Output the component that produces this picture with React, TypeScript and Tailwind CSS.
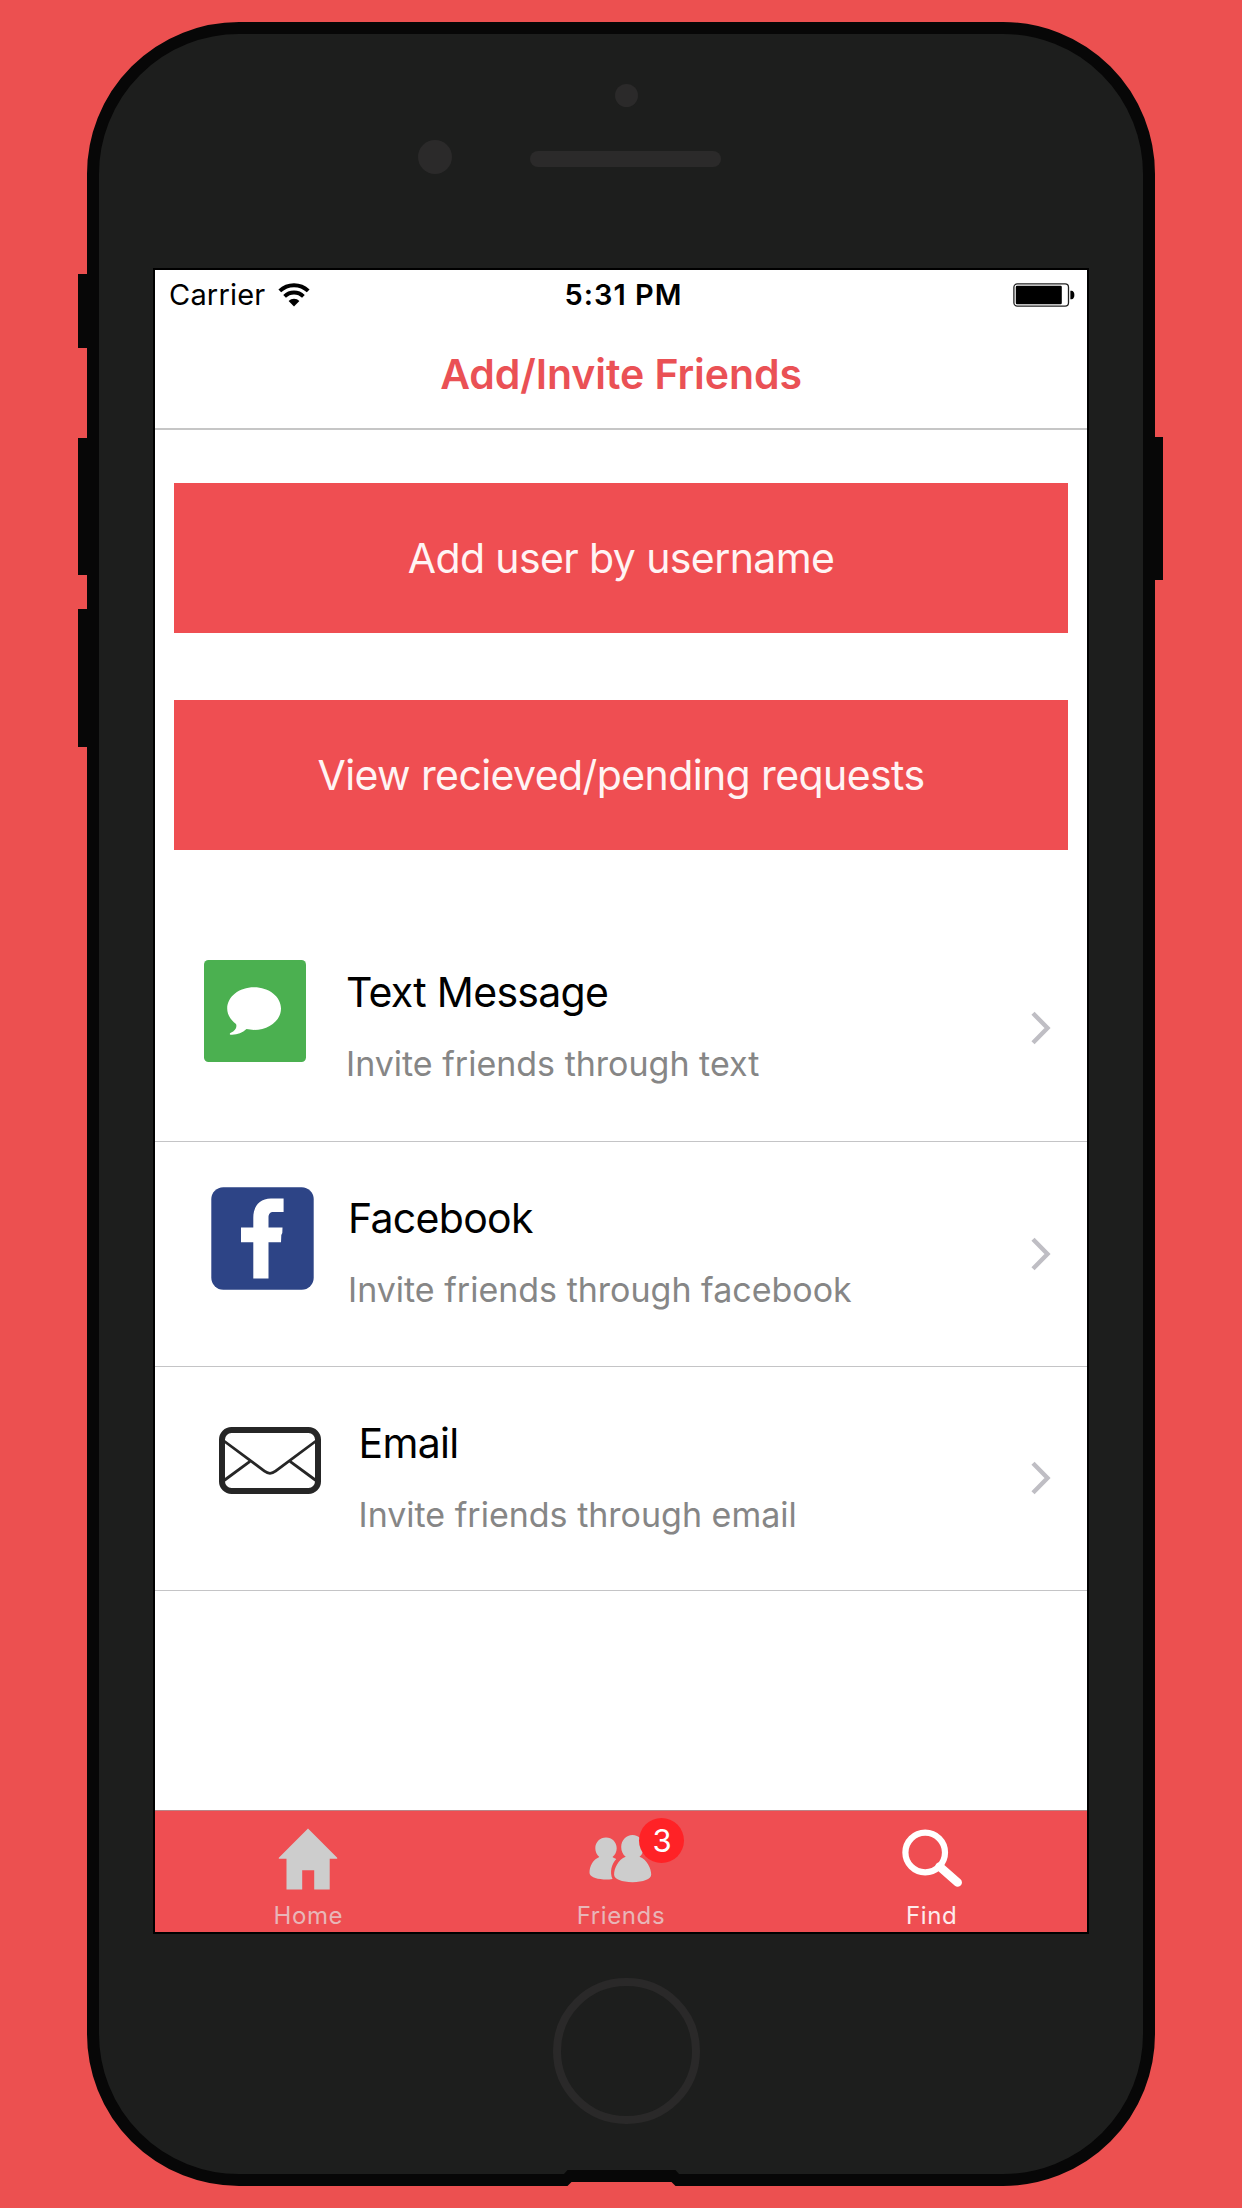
import type { ReactNode } from "react";

function WifiIcon() {
  return (
    <svg className="h-[24px] w-[32px]" viewBox="0 0 32 24" fill="none">
      <path d="M1.800 7.900a20.500 20.500 0 0 1 28.400 0" stroke="#000" strokeWidth="4" />
      <path d="M6.600 13.400a13.300 13.300 0 0 1 18.800 0" stroke="#000" strokeWidth="3.800" />
      <path d="M16 23.400l-5.400-5.400a7.600 7.600 0 0 1 10.800 0z" fill="#000" />
    </svg>
  );
}

function BatteryIcon() {
  return (
    <svg className="h-[24px] w-[62px]" viewBox="0 0 62 24">
      <rect x="0.900" y="0.900" width="54.600" height="22.200" rx="3.400" fill="#fff" stroke="#222" strokeWidth="1.300" />
      <rect x="2.800" y="2.800" width="46" height="18.400" rx="1.200" fill="#000" />
      <path d="M57.400 7.800h1.200c1.600 0 2.800 1.600 2.800 4.200s-1.200 4.200-2.800 4.200h-1.200z" fill="#000" />
    </svg>
  );
}

function MessageIcon() {
  return (
    <svg className="h-[102px] w-[102px]" viewBox="0 0 102 102">
      <rect width="102" height="102" rx="4.500" fill="#4bb050" />
      <path
        d="M50 27.300c14.900 0 27 9.400 27 21.300s-12.100 21.300-27 21.300c-2.700 0-5.200-.3-7.500-.8-4.200 3.800-9.500 6-15.500 5.700-1.600-.1-1.600-1.400-.2-2 4.400-1.900 6.600-5.300 5.200-8.800C26.700 60 23.200 54.600 23.200 48.600c0-11.900 12-21.300 26.800-21.300z"
        fill="#fff"
      />
    </svg>
  );
}

function FacebookIcon() {
  return (
    <svg className="h-[103px] w-[103px]" viewBox="0 0 103 103">
      <rect x="0.300" y="0.300" width="102.400" height="102.400" rx="12" fill="#2d4486" />
      <path
        d="M42.300 91.500V55.300H30V40.500h12.300V30.500c0-11.500 6.700-19 17.500-19H72.600V25H62.500c-3.500 0-5 2-5 5.500v10h14l-.2 5.500-1 2-.3 7.300H57.500v36.200z"
        fill="#fff"
      />
    </svg>
  );
}

function EmailIcon() {
  return (
    <svg className="mt-[15.500px] h-[68px] w-[102px]" viewBox="0 0 102 68" fill="none" stroke="#262626">
      <rect x="3" y="3" width="96" height="61" rx="9.500" strokeWidth="6" />
      <path d="M5 14l40.500 30.200c3.500 2.700 7.500 2.700 11 0L97 14" strokeWidth="2.800" />
      <path d="M5 53.500l26-19.200M97 53.500l-26-19.200" strokeWidth="2.800" />
    </svg>
  );
}

function Chevron() {
  return (
    <svg className="h-[34px] w-[20px]" viewBox="0 0 20 34" fill="none">
      <path d="M2 2.300L16.500 17 2 31.700" stroke="#bfbec4" strokeWidth="4.400" />
    </svg>
  );
}

function HomeIcon() {
  return (
    <svg className="h-[62px] w-[60px]" viewBox="0 0 60 62">
      <path d="M30 0.500l29.200 29.200v1H51.700V61.500H36.200V42.300H24.200V61.500H8.500V30.700H0.800v-1z" fill="#cdcdcd" />
    </svg>
  );
}

function FriendsIcon() {
  return (
    <svg className="h-[48px] w-[63px]" viewBox="0 0 63 48" fill="#cdcdcd">
      <path d="M17 2.500c6 0 10.700 4.700 10.700 10.700 0 3.600-1.600 6.700-4.200 8.800.7.800 2.200 1.300 3.800 2.100-4.800 4.600-6.800 13.700-3.800 19.900-3 .5-6.300.6-9 .4C6 44.100.500 41.500.500 37.600c0-6.600 3.600-13 9.800-15.600-2.400-2-4-5.200-4-8.800C6.300 7.200 11 2.500 17 2.500z" />
      <path d="M43.500 0c6.300 0 11.400 5.300 11.400 12 0 4-1.700 7.600-4.400 9.800C58 24.600 62.200 33.500 62.200 39.600c0 4.700-8 7.600-18.700 7.600s-18.400-2.900-18.400-7.600c0-6.100 4-15 11.600-17.800-2.800-2.200-4.500-5.800-4.500-9.800C32.200 5.300 37.200 0 43.500 0z" />
    </svg>
  );
}

function SearchIcon() {
  return (
    <svg className="h-[61px] w-[61px]" viewBox="0 0 61 61" fill="none" stroke="#fff">
      <circle cx="23.200" cy="23.500" r="19.800" strokeWidth="6.200" />
      <path d="M37.500 37.500L55.700 53.500" strokeWidth="8.500" strokeLinecap="round" />
    </svg>
  );
}

function ActionButton({ children }: { children: ReactNode }) {
  return (
    <button className="flex h-[150px] w-full items-center justify-center bg-[#ef4e52] text-[41px] leading-[51px] font-normal tracking-[-0.600px] text-[#fff4f4]">
      {children}
    </button>
  );
}

type RowProps = {
  icon: ReactNode;
  title: string;
  subtitle: string;
  className: string;
  textClassName: string;
};

function InviteRow({ icon, title, subtitle, className, textClassName }: RowProps) {
  return (
    <li className={`flex border-b border-[#c4c4c6] pr-[36px] ${className}`}>
      {icon}
      <div className={`flex flex-1 flex-col gap-[22px] whitespace-nowrap ${textClassName}`}>
        <h2 className="text-[41px] leading-[50px] tracking-[-0.700px] text-black">{title}</h2>
        <p className="text-[34px] leading-[50px] text-[#868686]">{subtitle}</p>
      </div>
      <div className="self-center pb-[45px]">
        <Chevron />
      </div>
    </li>
  );
}

export default function App() {
  return (
    <div className="h-[2208px] w-[1242px] overflow-hidden bg-[#ec5050] pt-[22px] pl-[87px] font-[Inter,'Liberation_Sans',sans-serif]">
      <div className="relative h-[2164px] w-[1067.500px] rounded-[152px] border-[12px] border-[#070707] bg-[#1d1e1d] pt-[234px] pl-[54px]">
        {/* Side buttons */}
        <div className="absolute top-[240px] -left-[21px] h-[74px] w-[12px] bg-[#070707]" />
        <div className="absolute top-[403.500px] -left-[21px] h-[137.500px] w-[12px] bg-[#070707]" />
        <div className="absolute top-[575px] -left-[21px] h-[137.500px] w-[12px] bg-[#070707]" />
        <div className="absolute top-[403px] -right-[20px] h-[143px] w-[12px] bg-[#070707]" />

        {/* Camera, proximity sensor and speaker */}
        <div className="absolute top-[49.500px] left-[515.500px] h-[23px] w-[23px] rounded-full bg-[#2b2a2a]" />
        <div className="absolute top-[105.500px] left-[318.500px] h-[34px] w-[34px] rounded-full bg-[#2b2a2a]" />
        <div className="absolute top-[116.500px] left-[431.300px] h-[16px] w-[191px] rounded-full bg-[#2b2a2a]" />

        {/* Home button */}
        <div className="absolute top-[1943.500px] left-[454px] h-[146.500px] w-[147px] rounded-full border-[8.500px] border-[#2a2929]" />

        {/* Charging port */}
        <svg className="absolute -bottom-[12px] left-[464px] h-[17px] w-[118px]" viewBox="0 0 118 17">
          <path d="M1 5L4.500 1H112.500L116 5V17H1z" fill="#070707" />
          <path d="M4.500 17L8.500 13H108.500L112.500 17z" fill="#ec5050" />
        </svg>

        <div className="flex h-[1666px] w-[936px] flex-col border-2 border-black bg-white">
          <div className="grid h-[49px] grid-cols-3 items-center pr-[12px] pl-[14px] text-[29px] leading-[49px] text-black">
            <div className="flex items-center gap-[13px]">
              <span className="tracking-[0.200px]">Carrier</span>
              <WifiIcon />
            </div>
            <span className="pl-[3px] text-center font-semibold tracking-[1px]">5:31 PM</span>
            <div className="flex justify-end">
              <BatteryIcon />
            </div>
          </div>
          <h1 className="h-[111px] border-b-2 border-[#c6c6c6] text-center text-[41px] leading-[110px] font-semibold tracking-[-0.080px] text-[#ea5155]">
            Add/Invite Friends
          </h1>

          <div className="flex flex-col gap-[67px] px-[19px] pt-[53.400px]">
            <ActionButton>Add user by username</ActionButton>
            <ActionButton>View recieved/pending requests</ActionButton>
          </div>

          <ul className="mt-[66.600px] flex-1">
            <InviteRow
              className="h-[225px] pl-[49px] pt-[43px]"
              textClassName="ml-[40px] mt-[7px]"
              icon={<MessageIcon />}
              title="Text Message"
              subtitle="Invite friends through text"
            />
            <InviteRow
              className="h-[225px] pl-[56px] pt-[45px]"
              textClassName="ml-[34px] mt-[6px]"
              icon={<FacebookIcon />}
              title="Facebook"
              subtitle="Invite friends through facebook"
            />
            <InviteRow
              className="h-[224px] pl-[64px] pt-[45px]"
              textClassName="ml-[37.500px] mt-[6px]"
              icon={<EmailIcon />}
              title="Email"
              subtitle="Invite friends through email"
            />
          </ul>

          <nav className="grid h-[122px] grid-cols-3 border-t-[1px] border-[#b98587] bg-[#ef4e52] text-[24px] leading-[30px] tracking-[0.600px] text-[#e8b6b8]">
            <a className="flex flex-col items-center pr-[4px]">
              <span className="flex h-[90px] items-center pt-[5px]">
                <HomeIcon />
              </span>
              <span>Home</span>
            </a>
            <a className="flex flex-col items-center">
              <span className="relative flex h-[90px] items-center pt-[5px]">
                <FriendsIcon />
                <span className="absolute top-[7px] left-[50px] flex h-[45px] w-[45px] items-center justify-center rounded-full bg-[#ff2226] text-[31px] tracking-normal text-white">
                  3
                </span>
              </span>
              <span>Friends</span>
            </a>
            <a className="flex flex-col items-center text-[#fdebec]">
              <span className="flex h-[90px] items-center pt-[7px] pl-[2px]">
                <SearchIcon />
              </span>
              <span>Find</span>
            </a>
          </nav>
        </div>
      </div>
    </div>
  );
}
